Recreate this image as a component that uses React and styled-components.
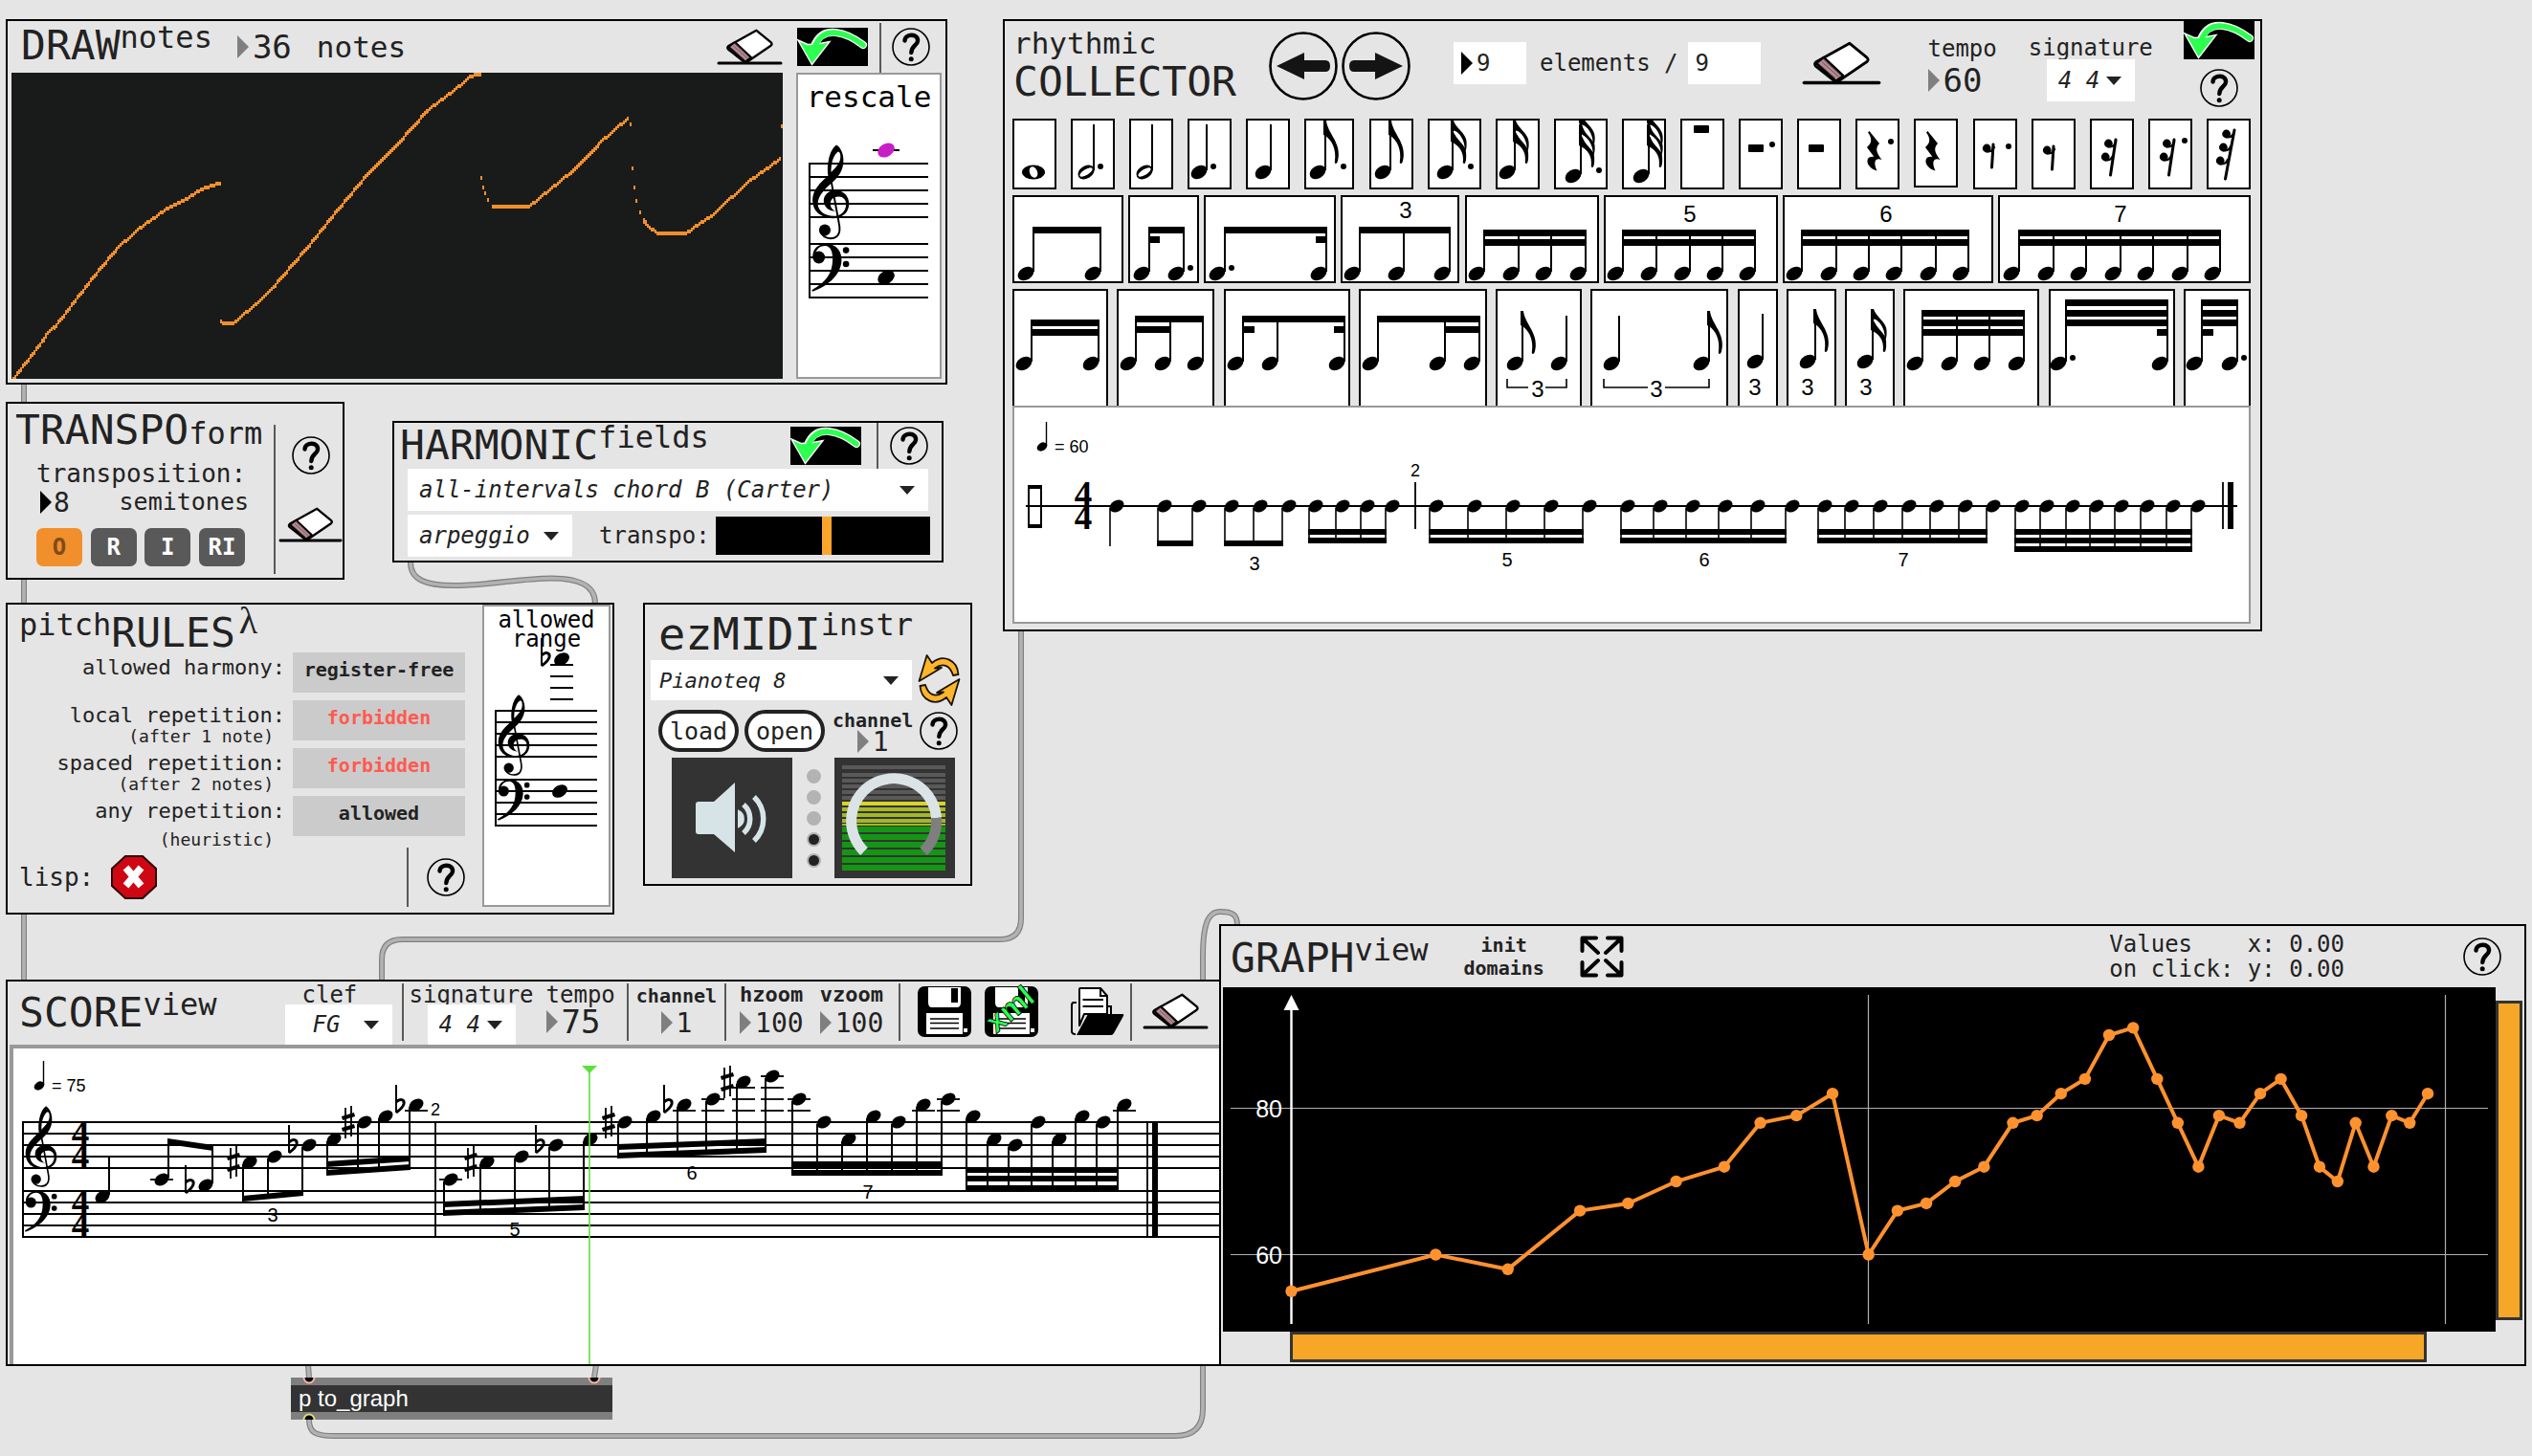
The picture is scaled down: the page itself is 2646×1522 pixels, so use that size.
import React from "react";
import styled, { createGlobalStyle, css } from "styled-components";

const MONO = '"DejaVu Sans Mono", monospace';
const SANS = '"Liberation Sans", Arial, sans-serif';
const INK = "#222";
const GREY = "#e5e5e5";
const ORANGE = "#f28f2d";

const Global = createGlobalStyle`
  * { box-sizing: border-box; }
  body { margin: 0; background: ${GREY}; color: ${INK}; font-family: ${MONO}; }
  svg { display: block; flex: none; }
  button, input, select { font-family: inherit; color: inherit; margin: 0; padding: 0; border: 0; border-radius: 0; }
  button { background: none; cursor: pointer; }
  h2 { margin: 0; font-weight: 400; }
`;

/* ---------- patcher canvas ---------- */

const Canvas = styled.main`
  position: relative;
  min-height: 100vh;
  overflow: hidden;
`;

const Cords = styled.svg`
  position: absolute;
  left: 0;
  top: 0;
`;

const Patch = styled.section`
  position: absolute;
  left: ${(p) => p.$x}px;
  top: ${(p) => p.$y}px;
  ${(p) => (p.$right !== undefined ? `right: ${p.$right}px;` : `width: ${p.$w}px;`)}
  border: 2px solid #000;
  background: ${GREY};
`;

/* ---------- shared parts ---------- */

const Row = styled.div`
  display: flex;
  align-items: ${(p) => p.$align || "center"};
  justify-content: ${(p) => p.$justify || "flex-start"};
  gap: ${(p) => p.$gap || 0}px;
  height: ${(p) => (p.$h ? p.$h + "px" : "auto")};
  padding: ${(p) => p.$pad || 0};
`;

const Column = styled.div`
  display: flex;
  flex-direction: column;
  align-items: ${(p) => p.$align || "flex-start"};
  flex: ${(p) => (p.$grow ? 1 : "none")};
  align-self: ${(p) => (p.$top ? "flex-start" : "auto")};
  padding: ${(p) => p.$pad || 0};
  margin-left: ${(p) => (p.$auto ? "auto" : (p.$ml || 0) + "px")};
`;

const Space = styled.span`
  flex: none;
  width: ${(p) => p.$w}px;
`;

const Fill = styled.span`
  flex: 1;
`;

const Title = styled.h2`
  display: flex;
  align-items: ${(p) => (p.$level ? "baseline" : "flex-start")};
  align-self: flex-start;
  height: ${(p) => (p.$h ? p.$h + "px" : "auto")};
  padding: ${(p) => p.$pad || 0};
  font-size: ${(p) => (p.$large ? 47 : 43)}px;
  line-height: ${(p) => (p.$large ? 62 : 46)}px;
  white-space: nowrap;
`;

const Small = styled.span`
  font-size: 32px;
  line-height: ${(p) => p.$lh || 30}px;
`;

const Lambda = styled.span`
  padding-left: 4px;
  font-family: "Liberation Serif", serif;
  font-size: 40px;
  line-height: 22px;
`;

const Text = styled.span`
  font-size: ${(p) => p.$size || 24}px;
  line-height: ${(p) => p.$lh || 24}px;
  font-weight: ${(p) => (p.$bold ? 700 : 400)};
  color: ${(p) => p.$color || INK};
  text-align: ${(p) => p.$textAlign || "left"};
  white-space: pre;
`;

const Label = styled(Text).attrs({ as: "label" })``;

const Divider = styled.span`
  flex: none;
  align-self: stretch;
  width: 2px;
  margin: ${(p) => p.$inset || 0};
  background: #595959;
`;

const IconButton = styled.button`
  display: flex;
  flex: none;
  svg { overflow: visible; }
`;

const NumberField = styled.span`
  display: flex;
  align-items: center;
  gap: ${(p) => p.$gap || 4}px;
  height: ${(p) => p.$h || 36}px;
  input {
    width: ${(p) => p.$chars}ch;
    height: ${(p) => p.$h || 36}px;
    background: transparent;
    font-size: ${(p) => p.$size}px;
  }
`;

const WhiteField = styled.span`
  display: flex;
  align-items: center;
  gap: 4px;
  width: 76px;
  height: 44px;
  padding: 0 8px;
  background: #fff;
  input {
    width: 40px;
    background: transparent;
    font-size: 24px;
  }
`;

const Picker = styled.span`
  position: relative;
  display: flex;
  flex: ${(p) => (p.$w ? "none" : 1)};
  width: ${(p) => (p.$w ? p.$w + "px" : "auto")};
  height: ${(p) => p.$h || 44}px;
  background: #fff;
  select {
    flex: 1;
    width: 100%;
    padding-left: ${(p) => p.$indent || 12}px;
    appearance: none;
    background: transparent;
    font-style: italic;
    font-size: ${(p) => p.$size || 24}px;
  }
  svg {
    position: absolute;
    right: 14px;
    top: calc(50% - 4px);
    pointer-events: none;
  }
`;

const Sheet = styled.div`
  display: flex;
  flex-direction: column;
  overflow: hidden;
  border: 2px solid #999;
  background: #fff;
  color: #000;
  width: ${(p) => (p.$w ? p.$w + "px" : "auto")};
  height: ${(p) => p.$h}px;
  padding-top: ${(p) => p.$top || 0}px;
  svg { overflow: visible; }
`;

const Triangle = ({ dark }) => (
  <svg width="12" height="24" viewBox="0 0 12 24">
    <path d="M0 0L12 12L0 24Z" fill={dark ? "#000" : "#7f7f7f"} />
  </svg>
);

const Num = ({ value, size = 34, h = 36, dark, gap, label }) => (
  <NumberField $size={size} $h={h} $gap={gap} $chars={value.length}>
    <Triangle dark={dark} />
    <input type="text" inputMode="numeric" aria-label={label} defaultValue={value} />
  </NumberField>
);

const Select = ({ value, label, ...rest }) => (
  <Picker {...rest}>
    <select aria-label={label} defaultValue={value}>
      <option>{value}</option>
    </select>
    <svg width="16" height="9" viewBox="0 0 16 9">
      <path d="M0 0H16L8 9Z" fill={INK} />
    </svg>
  </Picker>
);

/* ---------- icons ---------- */

const Help = () => (
  <IconButton aria-label="help">
    <svg width="40" height="40" viewBox="0 0 40 40">
      <circle cx="20" cy="20" r="19" fill="none" stroke="#000" strokeWidth="1.6" />
      <path d="M13.5 13.5C14 5.5 28 6 27 14C26.5 18.500 20.500 19 20.300 26" fill="none" stroke="#000" strokeWidth="4.400" strokeLinecap="round" />
      <circle cx="20.200" cy="32.800" r="2.500" />
    </svg>
  </IconButton>
);

const Eraser = ({ w = 69 }) => (
  <IconButton aria-label="erase">
    <svg width={w} height={Math.round((w * 38) / 69)} viewBox="0 0 69 38">
      <path d="M41.500 1.800L56.500 14.200Q58.500 16 56.500 17.700L32 34.500Q29.500 36 27.500 33.800L12 21.500Q10.500 19.700 12.300 18Z" fill="#fff" stroke="#000" strokeWidth="2.400" strokeLinejoin="round" />
      <path d="M12.500 19L19 14L36 30L29.500 34.500Z" fill="#b58b93" stroke="#000" strokeWidth="2" strokeLinejoin="round" />
      <path d="M15 20L29 32M17.500 18L32 31M19 16L34 30" stroke="#5d4248" strokeWidth=".7" />
      <path d="M2 36H67" stroke="#000" strokeWidth="3" strokeLinecap="round" />
    </svg>
  </IconButton>
);

const Send = () => (
  <IconButton aria-label="send">
    <svg width="74" height="40" viewBox="0 0 74 40">
      <path d="M0 0H74V40H0Z" />
      <path d="M69 18C52 5 27 -4 18 19" fill="none" stroke="#fff" strokeWidth="8" strokeLinecap="round" />
      <path d="M1 13L11 17.500L21 17L34 14.500L15.500 38.500Z" fill="#2cff4f" stroke="#fff" strokeWidth="1.400" />
      <path d="M69 18C52 5 27 -4 18 21" fill="none" stroke="#2cff4f" strokeWidth="5.600" strokeLinecap="round" />
    </svg>
  </IconButton>
);

const RoundArrow = ({ flip }) => (
  <IconButton aria-label={flip ? "next" : "previous"}>
    <svg width="72" height="72" viewBox="0 0 72 72">
      <circle cx="36" cy="36" r="34.500" fill="none" stroke="#000" strokeWidth="2.600" />
      <path transform={flip ? "translate(72 0) scale(-1 1)" : undefined} d="M8 36L37 22V30H59Q64 30 64 36Q64 42 59 42H37V50Z" fill="#141414" />
    </svg>
  </IconButton>
);

const Stop = () => (
  <IconButton aria-label="clear lisp">
    <svg width="48" height="46" viewBox="0 0 48 46">
      <path d="M15 1H33L47 14V32L33 45H15L1 32V14Z" fill="#cf0713" stroke="#2a0204" strokeWidth="2" />
      <path d="M15.500 13L31.500 32M31.500 13L15.500 32" stroke="#fff" strokeWidth="7.500" />
    </svg>
  </IconButton>
);

const REFRESH = "M42.500 21C41.500 6 27 -1 15 9L9.600 1L1.500 28L25 14L18 14.500C27 8 34 12 37 22Z";
const Refresh = () => (
  <IconButton aria-label="refresh instruments">
    <svg width="45" height="54" viewBox="0 0 45 54">
      <g fill="#fdb52b" stroke="#1a1205" strokeWidth="1.800" strokeLinejoin="round">
        <path d={REFRESH} />
        <path d={REFRESH} transform="rotate(180 22.500 27)" />
      </g>
    </svg>
  </IconButton>
);

const Floppy = ({ xml }) => (
  <IconButton aria-label={xml ? "save xml" : "save"}>
    <svg width="56" height="53" viewBox="0 0 56 53">
      <rect width="56" height="53" rx="7" />
      <path d="M11 1H45V17Q45 22 41 22H15Q11 22 11 17ZM9 28H47V50H9ZM48 44H52V48H48Z" fill="#fff" />
      <path d="M35 2H42V17H35Z" />
      <path d="M13 34H43M13 38.500H43M13 44H43" stroke="#000" strokeWidth="1.600" />
      {xml && (
        <text transform="translate(12 50) rotate(-40)" fontFamily={SANS} fontSize="32" fontWeight="700" fill="#2cff4f" stroke="#000" strokeWidth=".8">xml</text>
      )}
    </svg>
  </IconButton>
);

const Folder = () => (
  <IconButton aria-label="open">
    <svg width="56" height="50" viewBox="0 0 56 50">
      <path d="M6 16H3Q1 16 1 19V46Q1 49 5 49M39 20H42V28" fill="none" stroke="#000" strokeWidth="2" />
      <path d="M9 30V2Q9 1 10 1H31L38 9V28H14L9 40Z" fill="#fff" stroke="#000" strokeWidth="2" strokeLinejoin="round" />
      <path d="M31 1V9H38M12.500 13H34M12.500 20H34" fill="none" stroke="#000" strokeWidth="2" />
      <path d="M18 28H54Q56 28 55 30L45 48Q44 50 42 50H6Z" />
    </svg>
  </IconButton>
);

const Expand = () => (
  <IconButton aria-label="fit view">
    <svg width="46" height="44" viewBox="0 0 46 44">
      <path d="M2.500 16V2.500H17M3 3L19 18M29 2.500H43.500V16M43 3L27 18M2.500 28V41.500H17M3 41L19 26M29 41.500H43.500V28M43 41L27 26" fill="none" stroke="#000" strokeWidth="4" strokeLinecap="round" strokeLinejoin="round" />
    </svg>
  </IconButton>
);

/* ---------- music glyphs ---------- */

const range = (n) => Array.from({ length: n }, (_, i) => i);

const Head = ({ x, y, fill = "#000", s = 1 }) => (
  <ellipse cx={x} cy={y} rx={9 * s} ry={6.4 * s} transform={`rotate(-32 ${x} ${y})`} fill={fill} />
);

const HollowHead = ({ x, y }) => (
  <g transform={`translate(${x} ${y}) rotate(-32)`}>
    <ellipse rx="9.200" ry="6.600" />
    <ellipse rx="7.600" ry="2.900" fill="#fff" />
  </g>
);

const Whole = ({ x, y }) => (
  <g transform={`translate(${x} ${y})`}>
    <ellipse rx="12" ry="7.400" />
    <ellipse rx="4" ry="6" fill="#fff" transform="rotate(-22)" />
  </g>
);

const Stem = ({ x, y1, y2, w = 2 }) => <path d={`M${x} ${y1}V${y2}`} stroke="#000" strokeWidth={w} />;

const LONG = "M-2 0H1C2 12 15 22 13.800 37C13.300 42 12.500 45 11 45Q9.500 45 9.800 43C12 31 7 19 -2 15Z";
const UPPER = "M-2 0H1C3 8 14 13 14.500 22C15 28 14 31 13 33C12.500 23 8 13 -2 9Z";
const LAST = "M-2 8L0 10C3 19 12 22 14 33C14.500 39 14 45 12 45Q10.500 45 10.800 43C12 33 7 26 -2 22Z";
const SLIT = "M1.500 10.500C7 12 12 20 12.600 28C9 22 3 19 1.500 10.500Z";

const Flags = ({ x, y, n }) => (
  <g transform={`translate(${x} ${y})`}>
    {n === 1 && <path d={LONG} />}
    {n === 2 && (
      <>
        <path d={UPPER} />
        <path d={LAST} />
        <path d={SLIT} fill="#fff" />
      </>
    )}
    {n === 3 && (
      <>
        <path d={UPPER} transform="translate(0 -6)" />
        <path d={UPPER} transform="translate(0 4)" />
        <path d={LAST} transform="translate(0 4)" />
        <path d={SLIT} transform="translate(0 -6)" fill="#fff" />
        <path d={SLIT} transform="translate(0 5)" fill="#fff" />
      </>
    )}
  </g>
);

const Dot = ({ x, y }) => <circle cx={x} cy={y} r="3" />;

const QuarterRest = ({ x, y }) => (
  <path transform={`translate(${x} ${y})`} d="M2.500 0L13 13C8.500 18 9.500 22 15.500 30C9 27.500 6 32 10.500 41.500C-2 38 -2.500 25 7.500 27L0 17C6 12 5 7 1 1.500Z" />
);

const FlagRest = ({ x, y, n, h }) => (
  <g transform={`translate(${x} ${y})`}>
    <path d={`M${8 + n * 4} 1L10.500 ${h}`} stroke="#000" strokeWidth="3" strokeLinecap="round" />
    {range(n).map((i) => {
      const cx = 2 + (n - i) * 3.2;
      const cy = 5 + i * 14;
      return (
        <g key={i}>
          <circle cx={cx} cy={cy} r="4.400" />
          <path d={`M${cx - 1} ${cy + 3}Q${cx + 6} ${cy + 5} ${cx + 8} ${cy - 2}`} fill="none" stroke="#000" strokeWidth="2.200" />
        </g>
      );
    })}
  </g>
);

/* Clefs are drawn on a staff whose lines lie 36 units apart. */
const Treble = ({ x, y, gap }) => (
  <g transform={`translate(${x} ${y}) scale(${gap / 36}) translate(-40 -98)`}>
    <path fillRule="evenodd" d="M112 48C126 56 132 76 131 92C130 115 120 130 106 144C84 164 64 180 62 205C62 226 82 239 104 239C124 239 138 226 138 207C138 195 130 187 118 187C104 187 96 196 96 206C96 216 100 221 109 226C92 225 78 214 78 198C78 182 92 170 110 170C132 170 146 186 146 206C146 230 128 245 102 245C70 245 48 226 48 196C48 168 70 148 90 130C86 105 92 62 112 48ZM117 66C106 72 97 95 98 121C112 108 124 94 123 78C123 72 121 67 117 66Z" />
    <path d="M94 122L119 258C126 290 112 299 96 299C84 299 72 292 70 280" fill="none" stroke="#000" strokeWidth="5" />
    <circle cx="81" cy="277" r="15.500" />
  </g>
);

const Bass = ({ x, y, gap }) => (
  <g transform={`translate(${x} ${y}) scale(${gap / 36}) translate(-40 -315)`}>
    <path d="M49 350C47 328 64 315 84 315C112 315 127 334 126 360C124 397 92 427 48 443L46 439C84 418 102 395 102 355C102 334 96 321 82 320C68 320 58 328 55 344Z" />
    <circle cx="65" cy="351" r="16.500" />
    <circle cx="138" cy="332" r="8.500" />
    <circle cx="138" cy="369" r="8.500" />
  </g>
);

const Flat = ({ x, y }) => (
  <g transform={`translate(${x} ${y})`} fill="none" stroke="#000">
    <path d="M1 -21V8" strokeWidth="2" />
    <path d="M1 -3C5 -7 10 -6 9 -1C8 3 5 5 1 8" strokeWidth="3" />
  </g>
);

const Sharp = ({ x, y }) => (
  <g transform={`translate(${x} ${y})`} stroke="#000">
    <path d="M-3 -15V17M3 -17V15" strokeWidth="1.800" />
    <path d="M-6.500 -4L6.500 -8M-6.500 8L6.500 4" strokeWidth="4" />
  </g>
);

const Staff = ({ x1, x2, top, gap }) => (
  <g stroke="#000" strokeWidth="2">
    {[0, 1, 2, 3, 4, 6, 7, 8, 9, 10].map((i) => (
      <path key={i} d={`M${x1} ${top + i * gap}H${x2}`} strokeWidth="1.800" />
    ))}
    <path d={`M${x1} ${top - 1}V${top + 10 * gap + 1}`} />
  </g>
);

const Mark = ({ x, y, size = 20, children, anchor = "middle" }) => (
  <text x={x} y={y} fontFamily={SANS} fontSize={size} textAnchor={anchor}>{children}</text>
);

const Meter4 = ({ x, y, size = 37 }) => (
  <g fontFamily='"Liberation Serif", serif' fontWeight="700" fontSize={size} textAnchor="middle">
    <text x={x} y={y}>4</text>
    <text x={x} y={y + 24}>4</text>
  </g>
);

const Tempo = ({ x, y, value }) => (
  <g>
    <Head x={x} y={y} s={0.64} />
    <Stem x={x + 4.5} y1={y - 1} y2={y - 26} w={1.4} />
    <Mark x={x + 13} y={y + 6} size={18} anchor="start">= {value}</Mark>
  </g>
);

/* ---------- DRAW notes ---------- */

const CURVES = [
  [[13, 396], [45, 354], [49, 347], [56, 342], [96, 290], [121, 260], [147, 237], [175, 217], [191, 210], [207, 199], [230, 191]],
  [[230, 336], [233, 338], [241, 338], [246, 336], [267, 317], [287, 297], [319, 260], [357, 213], [383, 182], [421, 143], [446, 115], [472, 96], [491, 80], [497, 77], [502, 79]],
  [[514, 216], [552, 216], [596, 180], [625, 150], [656, 123]],
  [[672, 229], [676, 236], [686, 244], [716, 244], [743, 225], [784, 188], [816, 165]],
];
const SPARKS = [[503, 186], [505, 196], [507, 202], [510, 209], [659, 130], [661, 176], [663, 196], [665, 210], [669, 222], [817, 132]];

const sample = (points) => {
  const steps = [];
  for (let i = 0; i < points.length - 1; i++) {
    const [x0, y0] = points[i];
    const [x1, y1] = points[i + 1];
    for (let x = x0; x < x1; x += 2) {
      const slope = (y1 - y0) / (x1 - x0);
      const y = Math.round((y0 + slope * (x - x0)) / 2) * 2;
      steps.push([x, y, Math.max(4, Math.ceil(Math.abs(slope) * 2) + 2)]);
    }
  }
  return steps;
};

const Plot = styled.svg`
  flex: 1;
  min-width: 0;
  background: #191b1a;
`;

const DrawNotes = () => (
  <Patch $x={6} $y={20} $w={984}>
    <Row $h={54} $pad="0 16px 0 14px">
      <Title $pad="2px 0 0">DRAW<Small>notes</Small></Title>
      <Space $w={26} />
      <Num value="36" label="number of notes" />
      <Space $w={26} />
      <Text $size={31} $lh={36}>notes</Text>
      <Fill />
      <Eraser />
      <Space $w={15} />
      <Send />
      <Space $w={12} />
      <Divider $inset="2px 0 0" />
      <Space $w={11} />
      <Help />
    </Row>
    <Row $gap={14} $pad="0 4px 4px" $align="stretch">
      <Plot height="320" viewBox="12 76 806 320" preserveAspectRatio="none">
        <g fill={ORANGE}>
          {CURVES.map((c, i) => sample(c).map(([x, y, h]) => <rect key={`${i}-${x}`} x={x} y={y - 2} width="2" height={h} />))}
          {SPARKS.map(([x, y]) => <rect key={x} x={x - 1} y={y - 2} width="2" height="4" />)}
        </g>
      </Plot>
      <Sheet $w={152} $h={320}>
        <Text $size={31} $lh={46} $color="#000" $textAlign="center">rescale</Text>
        <svg width="148" height="200" viewBox="834 124 148 200">
          <Staff x1={846} x2={970} top={171} gap={14} />
          <Treble x={846} y={171} gap={14} />
          <Bass x={846} y={255} gap={14} />
          <path d="M912 157H940" stroke="#000" strokeWidth="2" />
          <Head x={926} y={157} fill="#c81ec8" s={1.05} />
          <Head x={926} y={290} s={1.05} />
        </svg>
      </Sheet>
    </Row>
  </Patch>
);

/* ---------- TRANSPO form ---------- */

const FormButton = styled.button`
  width: 48px;
  height: 40px;
  border-radius: 7px;
  background: ${(p) => (p.$on ? ORANGE : "#595959")};
  color: ${(p) => (p.$on ? "#7f4c18" : "#fff")};
  font-weight: 700;
  font-size: 24px;
`;

const TranspoForm = () => (
  <Patch $x={6} $y={420} $w={354}>
    <Row $align="stretch">
      <Column $grow $align="stretch">
        <Title $h={58} $pad="4px 0 0 8px" $level>TRANSPO<Small>form</Small></Title>
        <Column $align="stretch" $pad="0 18px 12px 30px">
          <Text $size={26} $lh={30}>transposition:</Text>
          <Row $h={30} $justify="space-between" $pad="0 8px 0 4px">
            <Num value="8" size={28} h={30} gap={2} dark label="transposition" />
            <Text $size={25} $lh={30}>semitones</Text>
          </Row>
          <Row $justify="space-between" $pad="12px 12px 0 0">
            {["O", "R", "I", "RI"].map((f, i) => <FormButton key={f} $on={i === 0}>{f}</FormButton>)}
          </Row>
        </Column>
      </Column>
      <Divider $inset="22px 0 4px" />
      <Column $align="center" $pad="34px 0 0 3px">
        <Help />
        <Row $pad="34px 0 0"><Eraser w={67} /></Row>
      </Column>
    </Row>
  </Patch>
);

/* ---------- HARMONIC fields ---------- */

const TranspoSlider = styled.input`
  appearance: none;
  width: 224px;
  height: 40px;
  background: #000;
  &::-webkit-slider-thumb {
    appearance: none;
    width: 10px;
    height: 40px;
    background: #fca52b;
  }
`;

const HarmonicFields = () => (
  <Patch $x={410} $y={440} $w={576}>
    <Row $h={48} $pad="0 14px 0 6px">
      <Title>HARMONIC<Small>fields</Small></Title>
      <Fill />
      <Send />
      <Space $w={16} />
      <Divider />
      <Space $w={12} />
      <Help />
    </Row>
    <Row $pad="0 14px 4px">
      <Select value="all-intervals chord B (Carter)" label="harmonic field" />
    </Row>
    <Row $pad="0 12px 4px 14px">
      <Select $w={172} value="arpeggio" label="mode" />
      <Space $w={28} />
      <Label htmlFor="transpo">transpo:</Label>
      <Fill />
      <TranspoSlider id="transpo" type="range" min="0" max="100" defaultValue="52" />
    </Row>
  </Patch>
);

/* ---------- pitch RULES ---------- */

const RuleGrid = styled.div`
  display: grid;
  grid-template-columns: 1fr 180px;
  grid-auto-rows: 42px;
  gap: 8px;
  padding: 0 18px 12px 0;
`;

const RuleLabel = styled.label`
  text-align: right;
  font-size: 22px;
  line-height: 32px;
  white-space: nowrap;
  small {
    display: block;
    margin-top: ${(p) => (p.$low ? 8 : 0)}px;
    padding-right: 12px;
    font-size: 18px;
    line-height: 12px;
  }
`;

const RuleValue = styled.button`
  padding-bottom: 6px;
  background: #cbcbcb;
  color: ${(p) => (p.$forbidden ? "#ff5a50" : INK)};
  font-weight: 700;
  font-size: 20px;
`;

const RULES = [
  { id: "harmony", label: "allowed harmony:", value: "register-free" },
  { id: "local", label: "local repetition:", note: "(after 1 note)", value: "forbidden" },
  { id: "spaced", label: "spaced repetition:", note: "(after 2 notes)", value: "forbidden" },
  { id: "any", label: "any repetition:", note: "(heuristic)", value: "allowed", low: true },
];

const PitchRules = () => (
  <Patch $x={6} $y={630} $w={636}>
    <Row $align="flex-start" $pad="0 2px 0 0">
      <Column $grow $align="stretch">
        <Title $h={50} $pad="6px 0 0 12px"><Small>pitch</Small>RULES<Lambda>λ</Lambda></Title>
        <RuleGrid>
          {RULES.map((r) => (
            <React.Fragment key={r.id}>
              <RuleLabel htmlFor={r.id} $low={r.low}>{r.label}{r.note && <small>{r.note}</small>}</RuleLabel>
              <RuleValue id={r.id} $forbidden={r.value === "forbidden"}>{r.value}</RuleValue>
            </React.Fragment>
          ))}
        </RuleGrid>
        <Row $h={68} $pad="0 18px 6px 12px">
          <Text $size={26}>lisp:</Text>
          <Space $w={18} />
          <Stop />
          <Fill />
          <Divider />
          <Space $w={19} />
          <Help />
        </Row>
      </Column>
      <Sheet $w={134} $h={316} $top={4}>
        <Text $lh={20} $color="#000" $textAlign="center">allowed</Text>
        <Text $lh={20} $color="#000" $textAlign="center">range</Text>
        <svg width="130" height="200" viewBox="506 678 130 200">
          <Staff x1={518} x2={624} top={743} gap={12} />
          <Treble x={518} y={743} gap={12} />
          <Bass x={518} y={815} gap={12} />
          <path d="M575 695H599M575 707H599M575 719H599M575 731H599" stroke="#000" strokeWidth="2" />
          <Flat x={565} y={688} />
          <Head x={587} y={689} s={0.95} />
          <Head x={585} y={827} s={0.95} />
        </svg>
      </Sheet>
    </Row>
  </Patch>
);

/* ---------- ezMIDI instr ---------- */

const PillButton = styled.button`
  width: 84px;
  height: 44px;
  border: 4px solid ${INK};
  border-radius: 22px;
  background: #fff;
  font-size: 25px;
`;

const GainDots = styled.div`
  display: flex;
  flex-direction: column;
  align-items: center;
  gap: 7px;
  width: 16px;
`;

const GainDot = styled.span`
  width: 15px;
  height: 15px;
  border: 2px solid #b3b3b3;
  border-radius: 50%;
  background: ${(p) => (p.$on ? INK : "#b3b3b3")};
`;

const BARS = [
  ...[8, 16, 22, 28, 34, 40].map((y) => [y, 4, "#595959"]),
  [46, 4, "#d9d32b"],
  ...[52, 58, 64].map((y) => [y, 4, "#a3b827"]),
  [69, 2, "#a3b827"],
  ...[72, 80, 88, 96, 104, 112].map((y) => [y, 6, "#149614"]),
];

const EzMidi = () => (
  <Patch $x={672} $y={630} $w={344}>
    <Title $large $h={58} $pad="0 0 0 14px">ezMIDI<Small $lh={42}>instr</Small></Title>
    <Row $h={42} $gap={6} $pad="0 10px 0 6px">
      <Select $h={42} $size={22} $indent={9} value="Pianoteq 8" label="instrument" />
      <Refresh />
    </Row>
    <Row $pad="10px 13px 6px 14px">
      <PillButton>load</PillButton>
      <Space $w={6} />
      <PillButton>open</PillButton>
      <Space $w={8} />
      <Column $align="center">
        <Text $bold $size={20} $lh={22}>channel</Text>
        <Num value="1" size={28} h={22} label="midi channel" />
      </Column>
      <Fill />
      <Help />
    </Row>
    <Row $gap={14} $pad="0 14px 6px 28px">
      <IconButton aria-label="audio on">
        <svg width="126" height="126" viewBox="0 0 126 126">
          <path d="M0 0H126V126H0Z" fill="#333" />
          <path d="M28 46H44L66 26V99L44 80H28Q25 80 25 77V49Q25 46 28 46Z" fill="#d6e4e8" />
          <path d="M70 56A9 9 0 0 1 70 72Z" fill="#d6e4e8" stroke="#d6e4e8" strokeWidth="2" />
          <g fill="none" stroke="#d6e4e8" strokeWidth="5.500">
            <path d="M75 49A20 20 0 0 1 75 79" />
            <path d="M86 41A32 32 0 0 1 86 87" />
          </g>
        </svg>
      </IconButton>
      <GainDots>
        {range(5).map((i) => <GainDot key={i} $on={i > 2} />)}
      </GainDots>
      <svg width="126" height="126" viewBox="0 0 126 126">
        <path d="M0 0H126V126H0Z" fill="#333" />
        {BARS.map(([y, h, c]) => <rect key={y} x="8" y={y} width="108" height={h} fill={c} />)}
        <path d="M31 98A44.500 44.500 0 1 1 106.500 63" fill="none" stroke="#dbe3e6" strokeWidth="11" />
        <path d="M106.500 63A44.500 44.500 0 0 1 93 98" fill="none" stroke="#7f7f7f" strokeWidth="11" />
      </svg>
    </Row>
  </Patch>
);

/* ---------- rhythmic COLLECTOR ---------- */

const Cell = styled.button`
  display: flex;
  flex: none;
  width: ${(p) => p.$w}px;
  height: ${(p) => p.$h}px;
  overflow: hidden;
  border: 2px solid #000;
  ${(p) => p.$open && css`border-bottom: 0;`}
  background: #fff;
`;

const Pattern = ({ w, h, open, name, children }) => (
  <Cell $w={w} $h={h} $open={open} aria-label={name}>
    <svg width={w - 4} height={h - 2} viewBox={`2 2 ${w - 4} ${h - 2}`}>{children}</svg>
  </Cell>
);

const Note = ({ x, y = 56, top = 6, dot, flags = 0, half }) => (
  <g>
    {half ? <HollowHead x={x} y={y} /> : <Head x={x} y={y} />}
    <Stem x={x + 8} y1={y - 2} y2={flags ? 0 : top} />
    {flags > 0 && <Flags x={x + 8} y={top - 4} n={flags} />}
    {dot && <Dot x={dot} y={y - 6} />}
  </g>
);

const SINGLES = [
  ["whole", 46, <Whole x={22} y={56} />],
  ["dotted half", 46, <Note x={16} half dot={31} />],
  ["half", 46, <Note x={16} half />],
  ["dotted quarter", 46, <Note x={12} dot={27} />],
  ["quarter", 46, <Note x={18} />],
  ["dotted eighth", 52, <Note x={14} flags={1} dot={41} />],
  ["eighth", 46, <Note x={14} flags={1} />],
  ["dotted sixteenth", 56, <Note x={18} flags={2} dot={45} />],
  ["sixteenth", 46, <Note x={12} flags={2} />],
  ["dotted thirty-second", 56, <Note x={20} y={60} flags={3} dot={47} />],
  ["thirty-second", 46, <Note x={20} y={60} flags={3} />],
  ["whole rest", 46, <rect x="14" y="7" width="16" height="8" rx="1" />],
  ["dotted half rest", 46, <><rect x="10" y="27" width="16" height="8" rx="1" /><Dot x={35} y={27} /></>],
  ["half rest", 46, <rect x="12" y="27" width="16" height="8" rx="1" />],
  ["dotted quarter rest", 46, <><QuarterRest x={12} y={13} /><Dot x={37} y={24} /></>],
  ["quarter rest", 46, <QuarterRest x={12} y={13} />],
  ["dotted eighth rest", 46, <><FlagRest x={9} y={26} n={1} h={25} /><Dot x={37} y={29} /></>],
  ["eighth rest", 46, <FlagRest x={11} y={28} n={1} h={25} />],
  ["sixteenth rest", 46, <FlagRest x={11} y={21} n={2} h={38} />],
  ["dotted sixteenth rest", 46, <><FlagRest x={11} y={21} n={2} h={38} /><Dot x={38} y={23} /></>],
  ["thirty-second rest", 46, <FlagRest x={9} y={11} n={3} h={52} />],
];

/* Beams: [y, first stem, last stem]; a stub is given by its start and end offsets. */
const Beamed = ({ heads, y, beams, stubs = [], dot, mark, markY }) => (
  <g>
    {heads.map((x) => <Head key={x} x={x} y={y} />)}
    {heads.map((x) => <Stem key={"s" + x} x={x + 8} y1={y - 2} y2={beams[0][0]} />)}
    {beams.map(([by, a = 0, b = heads.length - 1]) => (
      <rect key={by + "-" + a} x={heads[a] + 7} y={by} width={heads[b] - heads[a] + 2} height="7" />
    ))}
    {stubs.map(([by, a, b]) => <rect key={"t" + a} x={a} y={by} width={b - a} height="7" />)}
    {dot && <Dot x={dot} y={y - 6} />}
    {mark && <Mark x={mark[0]} y={markY} size={24}>{mark[1]}</Mark>}
  </g>
);

const TWO = [[36], [46]];
const GROUPS = [
  [116, { heads: [14, 84], beams: [[33]] }],
  [74, { heads: [14, 50], beams: [[33]], stubs: [[43, 22, 33]], dot: 65 }],
  [138, { heads: [14, 120], beams: [[33]], stubs: [[43, 117, 128]], dot: 29 }],
  [124, { heads: [12, 58, 106], beams: [[33]], mark: [68, "3"], markY: 24 }],
  [140, { heads: [12, 48, 82, 118], beams: TWO }],
  [182, { heads: [12, 47, 82, 116, 150], beams: TWO, mark: [90, "5"], markY: 28 }],
  [220, { heads: [12, 48, 82, 116, 152, 186], beams: TWO, mark: [108, "6"], markY: 28 }],
  [264, { heads: [14, 50, 84, 120, 154, 190, 224], beams: TWO, mark: [128, "7"], markY: 28 }],
];

const Bracket = ({ a, b }) => {
  const m = (a + b) / 2;
  return <path d={`M${a} 94V103H${m - 9}M${m + 9} 103H${b}V94`} fill="none" stroke="#000" strokeWidth="1.600" />;
};

const GROUPS_B = [
  [100, <Beamed y={78} heads={[12, 82]} beams={[[32], [42]]} />],
  [102, <Beamed y={78} heads={[12, 48, 82]} beams={[[28], [39, 0, 1]]} />],
  [132, <Beamed y={78} heads={[12, 48, 118]} beams={[[28]]} stubs={[[39, 20, 32], [39, 115, 126]]} />],
  [134, <Beamed y={78} heads={[12, 82, 118]} beams={[[28], [39, 1, 2]]} />],
  [90, <><Head x={20} y={78} /><Stem x={28} y1={76} y2={26} /><Flags x={28} y={23} n={1} /><Note x={66} y={78} top={28} /><Bracket a={12} b={74} /><Mark x={44} y={113} size={24}>3</Mark></>],
  [144, <><Note x={22} y={78} top={28} /><Head x={116} y={78} /><Stem x={124} y1={76} y2={26} /><Flags x={124} y={23} n={1} /><Bracket a={14} b={124} /><Mark x={69} y={113} size={24}>3</Mark></>],
  [42, <><Note x={18} y={76} top={26} /><Mark x={18} y={111} size={24}>3</Mark></>],
  [52, <><Head x={22} y={76} /><Stem x={30} y1={74} y2={24} /><Flags x={30} y={21} n={1} /><Mark x={22} y={111} size={24}>3</Mark></>],
  [52, <><Head x={21} y={76} /><Stem x={29} y1={74} y2={24} /><Flags x={29} y={21} n={2} /><Mark x={22} y={111} size={24}>3</Mark></>],
  [142, <Beamed y={78} heads={[12, 48, 82, 118]} beams={[[22], [32], [42]]} />],
  [132, <Beamed y={78} heads={[10, 116]} beams={[[11], [22], [32]]} stubs={[[42, 113, 124]]} dot={25} />],
  [70, <Beamed y={78} heads={[11, 48]} beams={[[11], [22], [32]]} stubs={[[42, 19, 31]]} dot={63} />],
];

/* Notes under one rhythm: head positions, number of beams, tuplet mark. */
const RHYTHM = [
  { xs: [1167], beams: 0 },
  { xs: [1217, 1253], beams: 1 },
  { xs: [1287, 1317, 1347], beams: 1, mark: ["3", 1311, 596] },
  { xs: [1375, 1403, 1429, 1455], beams: 2 },
  { xs: [1501, 1541, 1581, 1621, 1661], beams: 2, mark: ["5", 1575, 592] },
  { xs: [1701, 1735, 1769, 1803, 1837, 1873], beams: 2, mark: ["6", 1781, 592] },
  { xs: [1907, 1935, 1965, 1995, 2024, 2054, 2083], beams: 2, mark: ["7", 1989, 592] },
  { xs: [2113, 2139, 2166, 2191, 2217, 2244, 2271, 2297], beams: 3 },
];
const BEAM_Y = [[], [565], [553, 562], [553, 562, 571]];

const CollectorScore = () => (
  <svg width="100%" height="224" viewBox="1060 426 1290 224" preserveAspectRatio="xMinYMin">
    <Tempo x={1089} y={467} value="60" />
    <path d="M1072 529H2338" stroke="#000" strokeWidth="2" />
    <path d="M1074 507H1089V552H1074ZM1076 511V548H1087V511Z" fillRule="evenodd" />
    <Meter4 x={1132} y={529} />
    {RHYTHM.map(({ xs, beams, mark }) => {
      const ys = BEAM_Y[beams];
      const end = beams ? ys[ys.length - 1] + 3 : 571;
      return (
        <g key={xs[0]}>
          {xs.map((x) => <Head key={x} x={x} y={529} s={0.9} />)}
          {xs.map((x) => <Stem key={"s" + x} x={x - 7} y1={531} y2={end} w={1.6} />)}
          {ys.map((y) => <rect key={y} x={xs[0] - 8} y={y} width={xs[xs.length - 1] - xs[0] + 2} height="6" />)}
          {mark && <Mark x={mark[1]} y={mark[2]}>{mark[0]}</Mark>}
        </g>
      );
    })}
    <Mark x={1479} y={498} size={18}>2</Mark>
    <path d="M1479 504V553M2323 504V553" stroke="#000" strokeWidth="1.800" />
    <rect x="2328" y="504" width="6" height="49" />
  </svg>
);

const Collector = () => (
  <Patch $x={1048} $y={20} $w={1316}>
    <Row $h={102} $pad="0 6px 14px 9px">
      <Column $top $pad="6px 0 0">
        <Text $size={31} $lh={34}>rhythmic</Text>
        <Title>COLLECTOR</Title>
      </Column>
      <Space $w={34} />
      <Row $gap={4} $pad="6px 0 0">
        <RoundArrow />
        <RoundArrow flip />
      </Row>
      <Space $w={45} />
      <WhiteField>
        <Triangle dark />
        <input type="text" aria-label="current element" defaultValue="9" />
      </WhiteField>
      <Space $w={14} />
      <Text>elements /</Text>
      <Space $w={10} />
      <WhiteField>
        <input type="text" aria-label="total elements" defaultValue="9" />
      </WhiteField>
      <Space $w={43} />
      <Eraser w={83} />
      <Space $w={49} />
      <Column $top $pad="17px 0 0">
        <Text>tempo</Text>
        <Row $pad="3px 0 0"><Num value="60" label="tempo" /></Row>
      </Column>
      <Column $top $ml={33} $align="center" $pad="17px 0 0">
        <Text $lh={23}>signature</Text>
        <Select $w={92} value="4 4" label="time signature" />
      </Column>
      <Column $top $auto $align="center">
        <Send />
        <Row $pad="10px 0 0"><Help /></Row>
      </Column>
    </Row>
    <Row $justify="space-between" $align="flex-start" $pad="0 10px 6px 8px">
      {SINGLES.map(([name, w, art]) => <Pattern key={name} name={name} w={w} h={name === "quarter rest" ? 72 : 74}>{art}</Pattern>)}
    </Row>
    <Row $justify="space-between" $pad="0 10px 6px 8px">
      {GROUPS.map(([w, g], i) => <Pattern key={i} name={`group ${i + 1}`} w={w} h={92}><Beamed y={82} {...g} /></Pattern>)}
    </Row>
    <Row $justify="space-between" $pad="0 10px 0 8px">
      {GROUPS_B.map(([w, art], i) => <Pattern key={i} open name={`figure ${i + 1}`} w={w} h={122}>{art}</Pattern>)}
    </Row>
    <Column $align="stretch" $pad="0 10px 6px 8px">
      <Sheet $h={228}><CollectorScore /></Sheet>
    </Column>
  </Patch>
);

/* ---------- SCORE view ---------- */

const ScoreSheet = styled.div`
  margin-left: 2px;
  overflow: hidden;
  border: solid #999;
  border-width: 4px 0 0 4px;
  background: #fff;
`;

/* [x, y, accidental, ledger lines] */
const UP = [
  [107, 1251],
  [169, 1233, "", [1233]],
  [215, 1239, "b"],
];

const DOWN = [
  { notes: [[261, 1215, "#"], [287, 1209], [323, 1197, "b"]], ends: [[1250, 1244]], mark: ["3", 285, 1277] },
  { notes: [[349, 1191], [381, 1173, "#"], [403, 1167], [435, 1155, "b", [1161]]], ends: [[1214, 1208], [1223, 1217]] },
  { notes: [[471, 1233, "", [1233]], [509, 1215, "#"], [545, 1209], [581, 1197, "b"], [617, 1191]], ends: [[1256, 1250], [1265, 1259]], mark: ["5", 538, 1292] },
  { notes: [[653, 1173, "#"], [683, 1167], [715, 1155, "b", [1161]], [745, 1149, "", [1149, 1161]], [777, 1131, "#", [1137, 1149, 1161]], [807, 1125, "", [1125, 1137, 1149, 1161]]], ends: [[1196, 1190], [1205, 1199]], mark: ["6", 723, 1233] },
  { notes: [[835, 1149, "", [1149, 1161]], [861, 1173], [887, 1191], [913, 1167], [939, 1173], [965, 1155, "", [1161]], [991, 1149, "", [1149, 1161]]], ends: [[1214, 1214], [1223, 1223]], mark: ["7", 907, 1253] },
  { notes: [[1017, 1167], [1039, 1191], [1061, 1197], [1085, 1173], [1107, 1191], [1131, 1167], [1153, 1173], [1175, 1155, "", [1161]]], ends: [[1220, 1220], [1229, 1229], [1239, 1239]] },
];

const ScoreNote = ({ note: [x, y, accidental, ledgers = []] }) => (
  <g>
    <Head x={x} y={y} s={0.9} />
    {accidental === "#" && <Sharp x={x - 17} y={y} />}
    {accidental === "b" && <Flat x={x - 22} y={y} />}
    {ledgers.map((l) => <path key={l} d={`M${x - 12} ${l}H${x + 12}`} stroke="#000" strokeWidth="1.800" />)}
  </g>
);

const ScoreDrawing = () => (
  <svg width="100%" height="330" viewBox="14 1096 1260 330" preserveAspectRatio="xMinYMin slice">
    <Tempo x={41} y={1135} value="75" />
    <Staff x1={24} x2={1276} top={1173} gap={12} />
    <Treble x={24} y={1173} gap={12} />
    <Bass x={24} y={1245} gap={12} />
    <Meter4 x={84} y={1197} />
    <Meter4 x={84} y={1269} />
    {UP.map((n) => <ScoreNote key={n[0]} note={n} />)}
    <Stem x={114} y1={1249} y2={1210} />
    <Stem x={176} y1={1231} y2={1192} />
    <Stem x={222} y1={1237} y2={1198} />
    <path d="M175 1190L223 1197V1203L175 1196Z" />
    {DOWN.map(({ notes, ends, mark }) => {
      const x0 = notes[0][0] - 7;
      const x1 = notes[notes.length - 1][0] - 7;
      const [l, r] = ends[ends.length - 1];
      return (
        <g key={x0}>
          {notes.map((n) => <ScoreNote key={n[0]} note={n} />)}
          {notes.map(([x, y]) => (
            <Stem key={x} x={x - 7} y1={y + 2} y2={l + ((r - l) * (x - 7 - x0)) / (x1 - x0) + 4} />
          ))}
          {ends.map(([a, b]) => <path key={a} d={`M${x0 - 1} ${a}L${x1 + 1} ${b}V${b + 6}L${x0 - 1} ${a + 6}Z`} />)}
          {mark && <Mark x={mark[1]} y={mark[2]}>{mark[0]}</Mark>}
        </g>
      );
    })}
    <Mark x={455} y={1166} size={18}>2</Mark>
    <path d="M455 1173V1293M1199 1173V1293" stroke="#000" strokeWidth="1.800" />
    <rect x="1204" y="1173" width="6" height="120" />
    <path d="M608 1114H624L616 1122Z" fill="#5be03c" />
    <path d="M616 1118V1426" stroke="#5be03c" strokeWidth="1.600" />
  </svg>
);

const ScoreView = () => (
  <Patch $x={6} $y={1024} $w={1270}>
    <Row $h={66} $pad="0 0 4px 12px">
      <Title $pad="9px 0 0">SCORE<Small>view</Small></Title>
      <Column $top $ml={71}>
        <Row $pad="5px 0 0 18px"><Text $lh={19}>clef</Text></Row>
        <Select $w={112} $h={42} $indent={29} value="FG" label="clef" />
      </Column>
      <Space $w={10} />
      <Divider $inset="2px 0 0" />
      <Column $top $ml={6} $align="center" $pad="5px 0 0">
        <Text $lh={19}>signature</Text>
        <Select $w={92} $h={42} value="4 4" label="time signature" />
      </Column>
      <Column $top $ml={13} $pad="5px 0 0">
        <Text $lh={19}>tempo</Text>
        <Num value="75" label="tempo" />
      </Column>
      <Space $w={12} />
      <Divider $inset="2px 0 0" />
      <Column $top $ml={8} $align="center" $pad="4px 0 0">
        <Text $bold $size={20} $lh={22}>channel</Text>
        <Num value="1" size={28} h={34} label="midi channel" />
      </Column>
      <Space $w={8} />
      <Divider $inset="2px 0 0" />
      <Column $top $ml={14} $pad="2px 0 0">
        <Text $bold $size={22}>hzoom</Text>
        <Num value="100" size={28} h={34} label="horizontal zoom" />
      </Column>
      <Column $top $ml={17} $pad="2px 0 0">
        <Text $bold $size={22}>vzoom</Text>
        <Num value="100" size={28} h={34} label="vertical zoom" />
      </Column>
      <Space $w={16} />
      <Divider $inset="2px 0 0" />
      <Space $w={18} />
      <Row $gap={14}>
        <Floppy />
        <Floppy xml />
      </Row>
      <Space $w={34} />
      <Folder />
      <Space $w={6} />
      <Divider $inset="2px 0 0" />
      <Space $w={11} />
      <Eraser />
    </Row>
    <ScoreSheet><ScoreDrawing /></ScoreSheet>
  </Patch>
);

/* ---------- GRAPH view ---------- */

const BEATS = [[55], [60, 58], [66, 67, 70], [72, 78, 79, 82], [60, 66, 67, 70, 72], [78, 79, 82, 84, 90, 91], [84, 78, 72, 79, 78, 82, 84], [79, 72, 70, 78, 72, 79, 78, 82]];
const POINTS = BEATS.flatMap((notes, beat) =>
  notes.map((p, i) => [1349.5 + (beat + i / notes.length) * 150.8, 1311.5 - (p - 60) * 7.65])
);

const GraphBody = styled.div`
  display: grid;
  grid-template-columns: 1fr 28px;
  padding: 0 2px 2px;
`;

const GraphCanvas = styled.svg`
  width: 100%;
  background: #000;
`;

const ZoomBar = styled.div`
  border: 3px solid #333;
  background: #f6a728;
  ${(p) => (p.$vertical ? css`margin: 14px 0 12px;` : css`height: 32px; margin: 0 72px 0 70px;`)}
`;

const GraphTitleButton = styled.button`
  font-weight: 700;
  font-size: 20px;
  line-height: 24px;
  text-align: center;
`;

const GraphView = () => (
  <Patch $x={1274} $y={966} $right={6}>
    <Row $h={64} $pad="0 24px 0 10px">
      <Title $pad="10px 0 0">GRAPH<Small>view</Small></Title>
      <Space $w={37} />
      <GraphTitleButton>init<br />domains</GraphTitleButton>
      <Space $w={37} />
      <Expand />
      <Fill />
      <Text $lh={26}>{"Values    x: 0.00\non click: y: 0.00"}</Text>
      <Space $w={124} />
      <Help />
    </Row>
    <GraphBody>
      <GraphCanvas height="360" viewBox="1278 1032 1330 360" preserveAspectRatio="none">
        <path d="M1286 1158.500H2600M1286 1311.500H2600M1952.500 1040V1384M2555.500 1040V1384" stroke="#b0b0b0" strokeWidth="1.200" />
        <path d="M1349.500 1050V1384" stroke="#fff" strokeWidth="2.400" />
        <path d="M1349.500 1040L1357.500 1056H1341.500Z" fill="#fff" />
        <g fill="#fff">
          <Mark x={1340} y={1168} size={25} anchor="end">80</Mark>
          <Mark x={1340} y={1321} size={25} anchor="end">60</Mark>
        </g>
        <polyline points={POINTS.map((p) => p.join(",")).join(" ")} fill="none" stroke="#ff922e" strokeWidth="4" />
        {POINTS.map(([x, y]) => <circle key={x} cx={x} cy={y} r="6.200" fill="#ff922e" />)}
      </GraphCanvas>
      <ZoomBar $vertical />
      <ZoomBar />
    </GraphBody>
  </Patch>
);

/* ---------- p to_graph ---------- */

const Subpatch = styled.div`
  position: absolute;
  left: 304px;
  top: 1440px;
  width: 336px;
  padding: 0 8px;
  border: solid #7f7f7f;
  border-width: 8px 0;
  background: #333;
  color: #fff;
  font-family: ${SANS};
  font-size: 24px;
  line-height: 28px;
`;

const Ports = styled(Cords)`
  pointer-events: none;
`;

const CORDS = [
  "M25 402V1024",
  "M429 588C429 606 445 612 474 612C510 612 545 604.500 576 604.500C606 604.500 622 612 622 631",
  "M1067 660V960Q1067 982 1045 982H420Q399 982 399 1003V1025",
  "M323 1484C323 1498 330 1501 350 1501H1228Q1257 1501 1257 1473V1000C1257 960 1265 953 1275 953C1288 953 1293 956 1293 967",
  "M322 1427L323 1440",
  "M623 1427L621 1440",
];

export default function App() {
  return (
    <>
      <Global />
      <Canvas>
        <Cords width="1400" height="1522" viewBox="0 0 1400 1522">
          {CORDS.map((d) => (
            <g key={d} fill="none">
              <path d={d} stroke="#808080" strokeWidth="6" />
              <path d={d} stroke="#b2b2b2" strokeWidth="3.600" />
            </g>
          ))}
        </Cords>
        <DrawNotes />
        <TranspoForm />
        <HarmonicFields />
        <PitchRules />
        <EzMidi />
        <Collector />
        <ScoreView />
        <GraphView />
        <Subpatch>p to_graph</Subpatch>
        <Ports width="700" height="1522" viewBox="0 0 700 1522">
          <g stroke="#ffb3a6" strokeWidth="2">
            <path d="M317.500 1440A5.500 5.500 0 0 0 328.500 1440" />
            <path d="M615.500 1440A5.500 5.500 0 0 0 626.500 1440" />
          </g>
          <path d="M317.500 1484A5.500 5.500 0 0 1 328.500 1484" stroke="#d8e070" strokeWidth="2" />
        </Ports>
      </Canvas>
    </>
  );
}
